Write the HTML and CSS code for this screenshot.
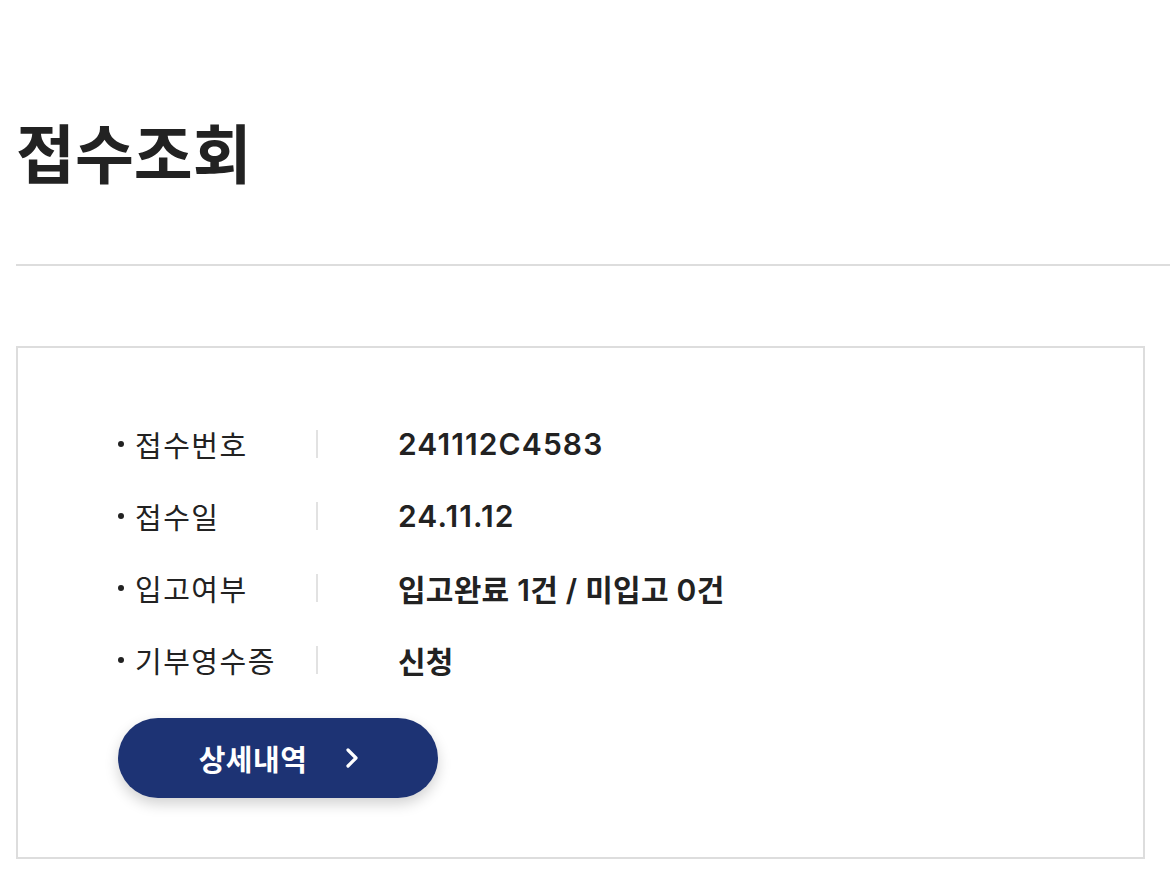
FILE: index.html
```html
<!DOCTYPE html>
<html lang="ko">
<head>
<meta charset="utf-8">
<link rel="stylesheet" href="styles.css">
</head>
<body>
<div class="page">
  <h1 class="title">접수조회</h1>
  <div class="divider"></div>
  <div class="card">
    <ul class="info">
      <li class="row"><span class="label">접수번호</span><span class="sep"></span><span class="value num">241112C4583</span></li>
      <li class="row"><span class="label">접수일</span><span class="sep"></span><span class="value num">24.11.12</span></li>
      <li class="row"><span class="label">입고여부</span><span class="sep"></span><span class="value">입고완료 1건 / 미입고 0건</span></li>
      <li class="row"><span class="label">기부영수증</span><span class="sep"></span><span class="value">신청</span></li>
    </ul>
    <button class="detail-btn" type="button">
      <span class="btn-text">상세내역</span>
      <svg class="chev" width="14" height="24" viewBox="0 0 14 24" aria-hidden="true"><path d="M3 4 L11 12 L3 20" fill="none" stroke="#fff" stroke-width="3.2" stroke-linecap="round" stroke-linejoin="round"/></svg>
    </button>
  </div>
</div>
</body>
</html>
```
FILE: styles.css
```css
* { box-sizing: border-box; }
html, body { margin: 0; padding: 0; background: #fff; }
body {
  font-family: Inter, "Noto Sans CJK KR", "Noto Sans", sans-serif;
  color: #222;
}
.page {
  padding: 0 0 40px 16px;
}
.title {
  margin: 0;
  padding-top: 116px;
  font-size: 64px;
  line-height: 78px;
  font-weight: 700;
  letter-spacing: 0;
  color: #222;
}
.divider {
  margin-top: 70px;
  height: 2px;
  background: #ddd;
}
.card {
  margin-top: 80px;
  width: 1129px;
  border: 2px solid #ddd;
  padding: 60px 0 59px 100px;
}
.info {
  list-style: none;
  margin: 0;
  padding: 0;
}
.row {
  display: flex;
  align-items: center;
  height: 72px;
}
.label {
  width: 198px;
  display: flex;
  align-items: center;
  font-size: 29px;
  letter-spacing: 1.5px;
  font-weight: 400;
  color: #222;
}
.label::before {
  content: "";
  width: 6px;
  height: 6px;
  border-radius: 50%;
  background: #222;
  margin-right: 11px;
}
.sep {
  width: 2px;
  height: 28px;
  background: #e2e2e2;
}
.value {
  margin-left: 80px;
  font-size: 30px;
  font-weight: 600;
  letter-spacing: 0.25px;
  color: #222;
}
.value.num {
  letter-spacing: 1.1px;
}
.detail-btn {
  margin-top: 22px;
  width: 320px;
  height: 80px;
  border: 0;
  border-radius: 40px;
  background: #1d3374;
  box-shadow: 0 6px 14px rgba(0, 0, 0, 0.18);
  display: flex;
  align-items: center;
  justify-content: center;
  gap: 38px;
  padding: 0 0 0 2px;
  font-family: inherit;
  color: #fff;
  cursor: pointer;
}
.btn-text {
  font-size: 29px;
  font-weight: 600;
  letter-spacing: 0.5px;
}
.chev { display: block; }
```
